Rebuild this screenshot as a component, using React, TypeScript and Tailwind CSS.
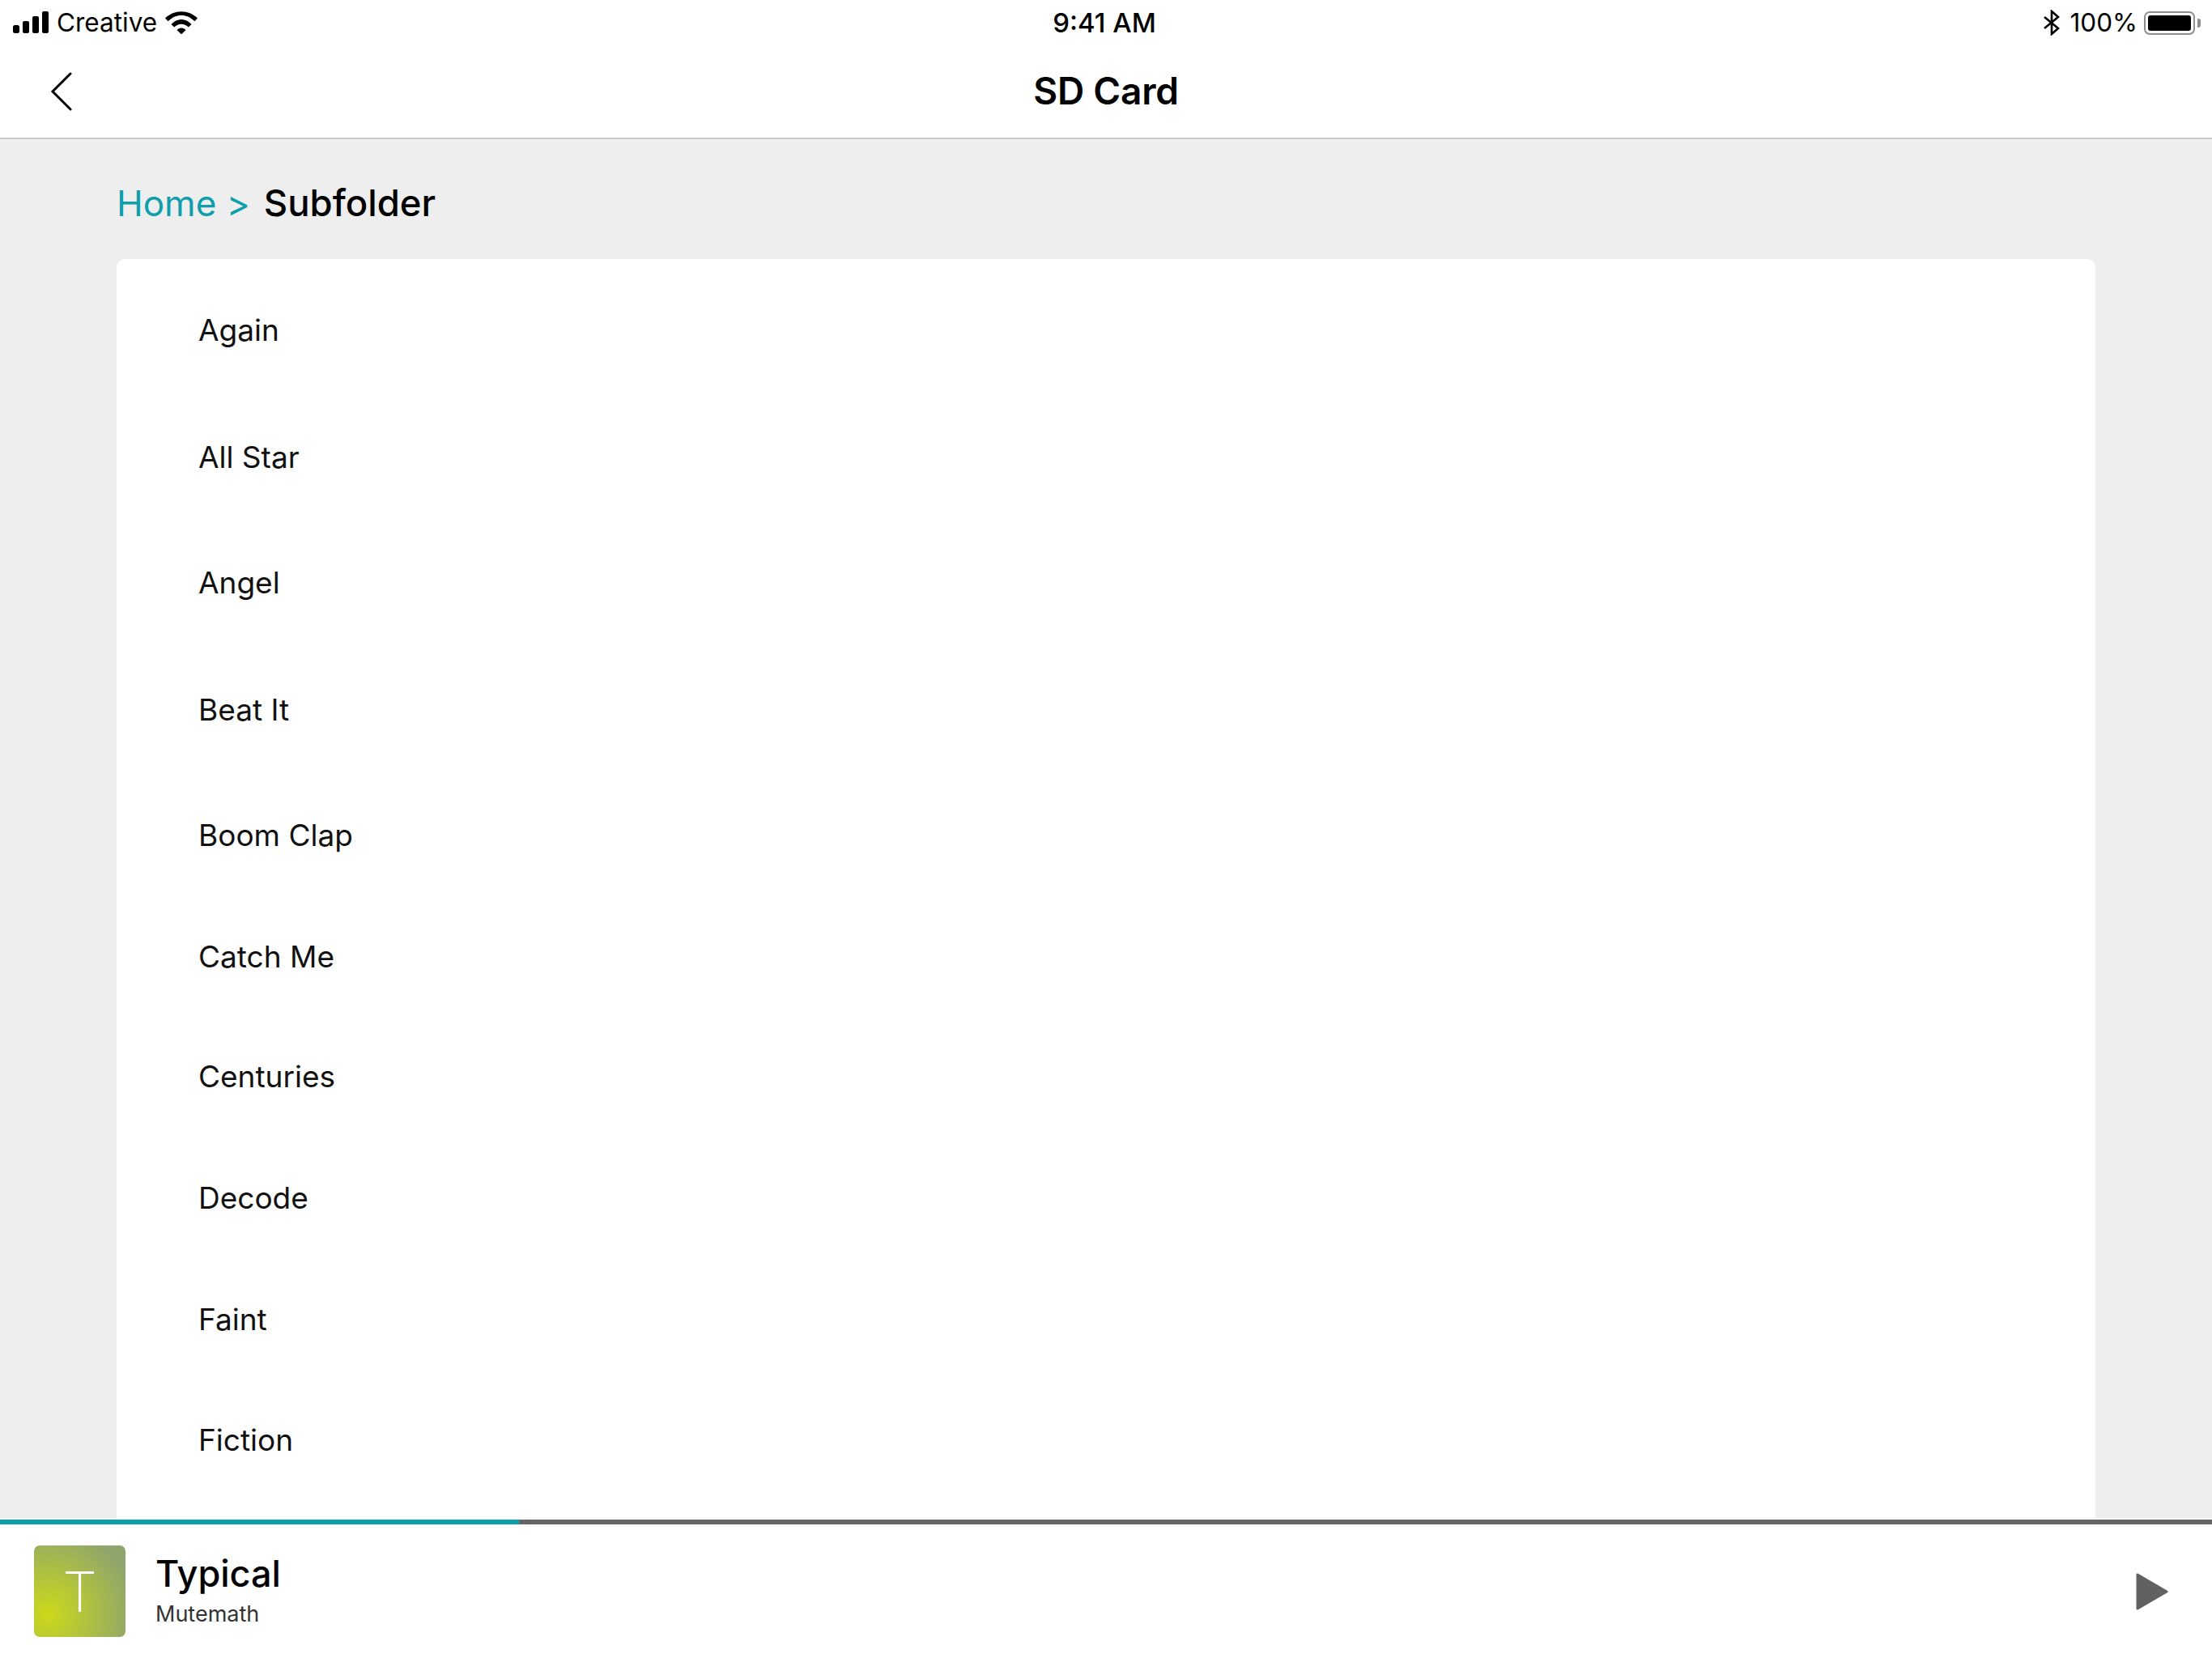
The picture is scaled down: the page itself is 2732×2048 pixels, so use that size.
import React from 'react';

const SONGS = [
  { name: 'Again', gap: 'mb-[97px]' },
  { name: 'All Star', gap: 'mb-[95px]' },
  { name: 'Angel', gap: 'mb-[97px]' },
  { name: 'Beat It', gap: 'mb-[95px]' },
  { name: 'Boom Clap', gap: 'mb-[90px]' },
  { name: 'Catch Me', gap: 'mb-[88px]' },
  { name: 'Centuries', gap: 'mb-[90px]' },
  { name: 'Decode', gap: 'mb-[90px]' },
  { name: 'Faint', gap: 'mb-[89px]' },
  { name: 'Fiction', gap: 'mb-[88px]' },
];

function StatusBar() {
  return (
    <div className="relative flex h-[56px] items-center justify-between pl-[16px] pr-[14px] text-[31.5px] leading-none text-black">
      <div className="flex items-center">
        <svg width="44" height="28" viewBox="0 0 44 28" fill="black">
          <rect x="0" y="17" width="8" height="10" rx="2.5" />
          <rect x="12" y="12" width="8" height="15" rx="2" />
          <rect x="24" y="6" width="8" height="21" rx="2" />
          <rect x="36" y="0" width="8" height="27" rx="2" />
        </svg>
        <span className="ml-[10px]">Creative</span>
        <svg className="ml-[10px]" width="40" height="28" viewBox="0 0 40 28" fill="black">
          <path d="M0 8.500C11-2.500 29-2.500 40 8.500l-3.600 3.800C27 2.500 13 2.500 3.600 12.300z" />
          <path d="M7.500 16C14.500 8 25.500 8 32.500 16l-3.600 3.600C23.500 14.500 16.500 14.500 11.100 19.600z" />
          <path d="M14.500 23C17.500 19.500 22.500 19.500 25.500 23L20 28.500z" />
        </svg>
      </div>
      <span className="absolute left-[1298px] top-[12px] w-[132px] text-center text-[33px] font-medium">9:41 AM</span>
      <div className="flex items-center">
        <svg width="20" height="32" viewBox="0 0 20 32" fill="none" stroke="black" strokeWidth="2.600">
          <path d="M1 9l17 14-8 7V2l8 7L1 23" />
        </svg>
        <span className="ml-[13px]">100%</span>
        <div className="ml-[8px] flex h-[29px] w-[63px] rounded-[7px] border-[2px] border-[#8e8e8e] bg-white p-[3px]">
          <div className="flex-1 rounded-[3px] bg-black" />
        </div>
        <div className="ml-[3px] h-[11px] w-[4px] rounded-r-[3px] bg-[#8e8e8e]" />
      </div>
    </div>
  );
}

function NavBar() {
  return (
    <div className="relative flex h-[116px] items-center justify-center border-b-2 border-[#c9c9c9] bg-white pb-[2px]">
      <button className="absolute left-[62px] top-[33px]">
        <svg width="30" height="48" viewBox="0 0 30 48" fill="none" stroke="black" strokeWidth="3" strokeLinecap="round">
          <path d="M25 2L3 24l22 22" />
        </svg>
      </button>
      <h1 className="text-[46px] font-semibold leading-none tracking-[-0.2px] text-black">SD Card</h1>
    </div>
  );
}

function NowPlaying() {
  return (
    <div className="flex flex-col bg-white">
      <div className="h-[6px] bg-[#666666]">
        <div className="h-full w-[641px] bg-[#0d9fad]" />
      </div>
      <div className="flex h-[165px] items-center pl-[42px] pr-[54px]">
        <div className="flex h-[113px] w-[113px] items-center justify-center rounded-[7px] bg-[radial-gradient(circle_at_15%_75%,#cbd91a,#8fa56c_85%)] text-[68px] font-extralight leading-none text-white">
          T
        </div>
        <div className="mb-[6px] ml-[37px] flex flex-1 flex-col">
          <span className="text-[45px] font-medium leading-[56px] text-black">Typical</span>
          <span className="mt-[6px] text-[27px] leading-[32px] text-[#333333]">Mutemath</span>
        </div>
        <svg width="40" height="46" viewBox="0 0 40 46" fill="#616161" stroke="#616161" strokeWidth="3" strokeLinejoin="round">
          <path d="M2 2v42l36-21z" />
        </svg>
      </div>
    </div>
  );
}

export default function App() {
  return (
    <div className="flex h-[2048px] w-[2732px] flex-col overflow-hidden bg-white font-['Inter',sans-serif]">
      <StatusBar />
      <NavBar />

      <div className="flex min-h-0 flex-1 flex-col bg-[#eeeeee] px-[144px]">
        <div className="flex h-[148px] shrink-0 items-center pt-[10px] leading-none">
          <span className="text-[44px] text-[#0d9fad]">Home &gt;</span>
          <span className="ml-[17px] text-[45.500px] font-medium text-black">Subfolder</span>
        </div>
        <div className="min-h-0 flex-1 overflow-hidden rounded-t-[10px] bg-white pl-[101px] pt-[58px]">
          {SONGS.map(song => (
            <div key={song.name} className={`h-[60px] text-[37px] leading-[60px] text-[#111111] ${song.gap}`}>
              {song.name}
            </div>
          ))}
        </div>
      </div>
      <div className="h-[2px] shrink-0 bg-white" />

      <NowPlaying />
    </div>
  );
}
